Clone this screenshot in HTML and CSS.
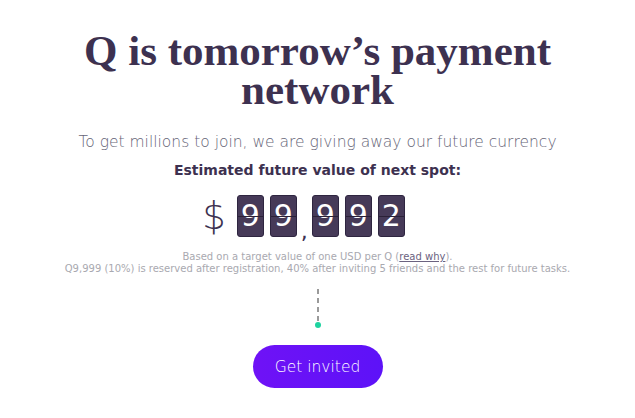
FILE: index.html
```html
<!DOCTYPE html>
<html lang="en">
<head>
  <meta charset="UTF-8" />
  <title>Q - Get invited</title>
  <link rel="stylesheet" href="styles.css">
</head>
<body>
  <div class="hero">
    <h1>Q is tomorrow’s payment network</h1>
    <p class="lead">To get millions to join, we are giving away our future currency</p>
    <p class="label">Estimated future value of next spot:</p>

    <div class="counter">
      <span class="dollar">$</span>
      <span class="digit">9</span>
      <span class="digit">9</span>
      <span class="comma">,</span>
      <span class="digit">9</span>
      <span class="digit">9</span>
      <span class="digit">2</span>
    </div>

    <p class="note">
      Based on a target value of one USD per Q (<a href="#">read why</a>).<br>
      Q9,999 (10%) is reserved after registration, 40% after inviting 5 friends and the rest for future tasks.
    </p>

    <div class="line"></div>
    <div class="dot"></div>

    <button class="cta">Get invited</button>
  </div>
</body>
</html>
```

FILE: styles.css
```css
body {
  margin: 0;
  background: #fff;
  font-family: "DejaVu Sans", sans-serif;
  color: #3d3150;
}

.hero {
  display: flex;
  flex-direction: column;
  align-items: center;
  text-align: center;
  padding-top: 31px;
}

h1 {
  font-family: "Liberation Serif", serif;
  font-weight: bold;
  font-size: 43px;
  line-height: 39px;
  width: 580px;
  margin: 0;
  color: #3d3150;
}

.lead {
  margin: 24px 0 0;
  font-size: 15.5px;
  font-weight: 300;
  color: #666577;
}

.label {
  margin: 11px 0 0;
  font-size: 14px;
  font-weight: bold;
  color: #3d3150;
}

.counter {
  display: flex;
  align-items: center;
  gap: 6px;
  margin-top: 17px;
  padding-right: 28px;
  height: 42px;
}

.dollar {
  font-size: 37px;
  font-weight: 200;
  color: #3d3150;
  margin-right: 5px;
  line-height: 1;
}

.digit {
  position: relative;
  width: 25px;
  height: 40px;
  background: #463a58;
  border: 1px solid #2e2540;
  border-radius: 3px;
  color: #fff;
  font-size: 30px;
  font-weight: normal;
  line-height: 40px;
}

.digit::after {
  content: "";
  position: absolute;
  left: 0;
  right: 0;
  top: 20px;
  height: 1px;
  background: #2a2138;
}

.comma {
  align-self: flex-end;
  font-size: 22px;
  line-height: 10px;
  margin: 0 -2px;
  color: #3d3150;
}

.note {
  margin: 14px 0 0;
  font-size: 10px;
  line-height: 12px;
  color: #a9a9b0;
}

.note a {
  color: #6b6280;
}

.line {
  margin-top: 14px;
  width: 2px;
  height: 34px;
  background: repeating-linear-gradient(to bottom, #9a9a9a 0 5px, transparent 5px 9px);
}

.dot {
  width: 6px;
  height: 6px;
  border-radius: 50%;
  background: #1ed3a0;
  margin-top: -1px;
}

.cta {
  margin-top: 17px;
  width: 130px;
  height: 43px;
  border: none;
  border-radius: 22px;
  background: linear-gradient(90deg, #6f12f6, #5d12f8);
  color: #fff;
  font-family: "DejaVu Sans", sans-serif;
  font-size: 15.5px;
  font-weight: 300;
  cursor: pointer;
}
```
